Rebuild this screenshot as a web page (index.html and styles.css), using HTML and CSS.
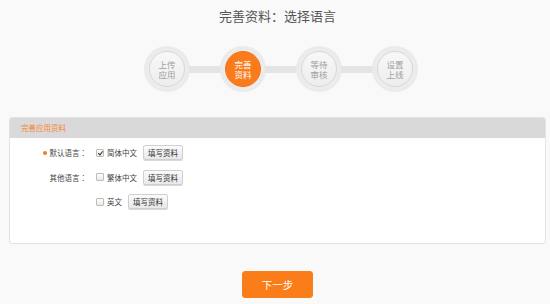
FILE: index.html
```html
<!DOCTYPE html>
<html lang="zh">
<head>
<meta charset="utf-8">
<title>完善资料</title>
<link rel="stylesheet" href="styles.css">
</head>
<body>
<div class="page">
  <h1 class="title">完善资料<span class="colon">：</span>选择语言</h1>
  <div class="steps">
    <div class="step"><div class="step-inner">上传<br>应用</div></div>
    <div class="link"></div>
    <div class="step"><div class="step-inner active">完善<br>资料</div></div>
    <div class="link"></div>
    <div class="step"><div class="step-inner">等待<br>审核</div></div>
    <div class="link"></div>
    <div class="step"><div class="step-inner">设置<br>上线</div></div>
  </div>
  <div class="panel">
    <div class="panel-head">完善应用资料</div>
    <div class="panel-body">
      <div class="row">
        <div class="label"><span class="req"></span>默认语言<span class="colon">：</span></div>
        <label class="opt"><span class="cb checked"></span>简体中文</label>
        <button class="btn">填写资料</button>
      </div>
      <div class="row">
        <div class="label">其他语言<span class="colon">：</span></div>
        <label class="opt"><span class="cb"></span>繁体中文</label>
        <button class="btn">填写资料</button>
      </div>
      <div class="row">
        <div class="label"></div>
        <label class="opt"><span class="cb"></span>英文</label>
        <button class="btn">填写资料</button>
      </div>
    </div>
  </div>
  <div class="actions">
    <button class="next">下一步</button>
  </div>
</div>
</body>
</html>
```
FILE: styles.css
```css
* { box-sizing: border-box; }
html, body {
  margin: 0;
  padding: 0;
  background: #f9f9f9;
  font-family: "Noto Sans CJK SC", "Noto Sans", sans-serif;
}
.page {
  padding: 0 4px 0 9px;
}
.colon {
  font-family: "Noto Sans CJK TC", sans-serif;
}
.title {
  margin: 0;
  padding-top: 8px;
  height: 46px;
  font-size: 13px;
  line-height: 16px;
  font-weight: normal;
  color: #555;
  text-align: center;
}
.steps {
  display: flex;
  align-items: center;
  justify-content: center;
  padding-left: 7px;
  height: 46px;
}
.step {
  width: 46px;
  height: 46px;
  border-radius: 50%;
  background: radial-gradient(circle, #ececec 60%, #e2e2e2 100%);
  display: flex;
  align-items: center;
  justify-content: center;
  flex: none;
}
.link {
  width: 32px;
  height: 7px;
  margin: 0 -1px;
  background: #e4e4e4;
  flex: none;
}
.step-inner {
  width: 36px;
  height: 36px;
  border-radius: 50%;
  border: 1px solid #d8d8d8;
  background: linear-gradient(#f8f8f8, #ededed);
  color: #a0a0a0;
  font-size: 8.5px;
  line-height: 10.5px;
  text-align: center;
  display: flex;
  align-items: center;
  justify-content: center;
}
.step-inner.active {
  background: #f97b1c;
  border-color: #f4761a;
  color: #fff;
}
.panel {
  margin-top: 25px;
  height: 127px;
  background: #fff;
  border: 1px solid #e3e3e3;
  border-radius: 3px;
  overflow: hidden;
}
.panel-head {
  height: 20px;
  background: #d9d9d9;
  color: #f5883a;
  font-size: 7.5px;
  line-height: 20px;
  padding-left: 11px;
}
.panel-body {
  padding-top: 7px;
  display: flex;
  flex-direction: column;
  gap: 9.5px;
}
.row {
  display: flex;
  align-items: center;
  height: 15px;
}
.label {
  width: 77px;
  text-align: right;
  font-size: 7.5px;
  color: #444;
  display: flex;
  align-items: center;
  justify-content: flex-end;
}
.req {
  width: 4px;
  height: 4px;
  border-radius: 50%;
  background: #f37a2a;
  margin-right: 3px;
}
.opt {
  margin-left: 9px;
  display: flex;
  align-items: center;
  font-size: 7.5px;
  color: #444;
}
.cb {
  width: 8px;
  height: 8px;
  border: 1px solid #bdbdbd;
  border-radius: 1px;
  background: linear-gradient(#fff, #e9e9e9);
  margin-right: 3px;
  position: relative;
}
.cb.checked::after {
  content: "";
  position: absolute;
  left: 2px;
  top: 0px;
  width: 2px;
  height: 4px;
  border: solid #333;
  border-width: 0 1.2px 1.2px 0;
  transform: rotate(40deg);
}
.btn {
  margin-left: 6px;
  width: 40px;
  height: 15px;
  padding: 0;
  border: 1px solid #cfcfcf;
  border-radius: 2px;
  background: linear-gradient(#fbfbfb, #e8e8e8);
  font-family: inherit;
  font-size: 7.5px;
  color: #333;
  box-shadow: 0 1px 0 #d8d8d8;
}
.actions {
  display: flex;
  justify-content: center;
  margin-top: 27px;
}
.next {
  width: 71px;
  height: 27px;
  border: 1px solid #f6801f;
  border-radius: 3px;
  background: #fa7d19;
  color: #fff;
  font-family: inherit;
  font-size: 10.5px;
  padding: 0;
}
```
